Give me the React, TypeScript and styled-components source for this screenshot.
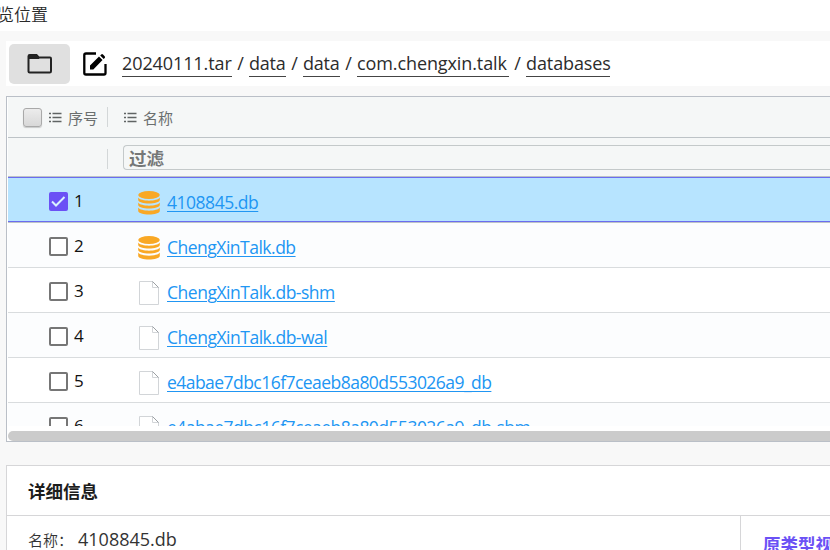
import React from "react";
import styled, { createGlobalStyle, css } from "styled-components";

const Global = createGlobalStyle`
  * { box-sizing: border-box; }
  html, body, #root { height: 100%; }
  body {
    margin: 0;
    overflow: hidden;
    background: #f8f8f8;
    color: #222;
    font-family: "Open Sans", "Noto Sans CJK SC", sans-serif;
  }
`;

const Page = styled.div`
  height: 550px;
  width: 830px;
  overflow: hidden;
  display: flex;
  flex-direction: column;
`;

const TitleBar = styled.header`
  flex: none;
  height: 31px;
  background: #fff;
  font-size: 17px;
  line-height: 30px;
  font-weight: 350;
  color: #2a2a2a;
  white-space: nowrap;
`;

const TitleText = styled.span`
  display: block;
  margin-left: -3px;
`;

const PathBar = styled.nav`
  flex: none;
  height: 45px;
  margin: 10px 0 10px 6px;
  padding-left: 3px;
  background: #fff;
  display: flex;
  align-items: center;
`;

const FolderButton = styled.button`
  width: 61px;
  height: 40px;
  padding: 0;
  margin-bottom: -1px;
  border: 0;
  border-radius: 5px;
  background: #e0e0e0;
  display: flex;
  align-items: center;
  justify-content: center;
`;

const EditButton = styled.button`
  width: 26px;
  height: 26px;
  margin: 0 14px 0 12px;
  padding: 0;
  border: 0;
  background: none;
  display: flex;
`;

const Crumbs = styled.div`
  display: flex;
  font-size: 18px;
  color: #2c2c2c;
  white-space: pre;
`;

const Crumb = styled.a<{ $w: number; $ls: number }>`
  width: ${(p) => p.$w}px;
  height: 26px;
  line-height: 24px;
  letter-spacing: ${(p) => p.$ls}px;
  border-bottom: 1px solid #444;
`;

const Slash = styled.span`
  width: 17px;
  line-height: 24px;
  text-align: center;
`;

const Grid = styled.section`
  flex: none;
  height: 346px;
  margin-left: 6px;
  border: 1px solid #babfc7;
  border-right: 0;
  background: #fff;
  padding-left: 1px;
  display: flex;
  flex-direction: column;
`;

const HeadRow = styled.div<{ $h: number }>`
  flex: none;
  height: ${(p) => p.$h}px;
  background: #f5f7f7;
  border-bottom: 1px solid #bdc3c7;
  display: flex;
  align-items: center;
  color: #6b6f6f;
  font-size: 15px;
`;

const IndexHead = styled.div<{ $top?: number }>`
  width: 100px;
  height: 20px;
  margin-top: ${(p) => p.$top ?? 0}px;
  border-right: 1px solid #d3d7d8;
  display: flex;
  align-items: center;
`;

const HeadCheck = styled.span`
  width: 19px;
  height: 19px;
  margin: 0 7px 0 15px;
  border: 1px solid #a9a9a9;
  border-radius: 3px;
  background: linear-gradient(#ececec, #d8d8d8);
  box-shadow: 0 1px 1px rgba(0, 0, 0, 0.18);
`;

const HeadLabel = styled.span`
  margin-left: 6px;
  line-height: 20px;
  padding-top: 1px;
`;

const NameHead = styled.div`
  margin-left: 16px;
  display: flex;
  align-items: center;
`;

const FilterBox = styled.div`
  flex: 1;
  height: 25px;
  margin-left: 15px;
  padding-left: 5px;
  border: 1px solid #c4c9ca;
  border-right: 0;
  border-radius: 4px 0 0 4px;
  color: #757777;
  font-size: 17.5px;
  font-weight: 700;
  line-height: 25px;
`;

const Body = styled.div`
  height: 249px;
  margin-bottom: 5px;
  overflow: hidden;
`;

const Row = styled.div<{ $selected?: boolean; $odd?: boolean }>`
  height: 45px;
  display: flex;
  align-items: center;
  background: ${(p) => (p.$odd ? "#fcfdfe" : "#fff")};
  border-bottom: 1px solid #d9dcde;
  ${(p) =>
    p.$selected &&
    css`
      height: 46px;
      background: #b7e4ff;
      border-top: 1px solid #6a6cf0;
      border-bottom: 1px solid #bdc3c7;
      box-shadow: inset 0 -1px 0 #6a6cf0;
    `}
`;

const Check = styled.span<{ $on?: boolean }>`
  width: 19px;
  height: 19px;
  margin: 3px 6px 0 41px;
  border: 2px solid ${(p) => (p.$on ? "#6b51f5" : "#767676")};
  border-radius: 2px;
  background: ${(p) => (p.$on ? "#6b51f5" : "#fff")};
  display: flex;
  align-items: center;
  justify-content: center;
`;

const Num = styled.span`
  width: 63px;
  font-size: 17px;
  letter-spacing: -0.5px;
  line-height: 24px;
  color: #111;
  margin-top: 1px;
`;

const IconCell = styled.span`
  width: 24px;
  height: 26px;
  margin: 5px 6px 0 0;
  display: flex;
  justify-content: center;
`;

const FileLink = styled.a<{ $w: number; $ls: number }>`
  width: ${(p) => p.$w}px;
  height: 24px;
  margin-top: 4px;
  line-height: 24px;
  font-size: 17.5px;
  letter-spacing: ${(p) => p.$ls}px;
  white-space: nowrap;
  color: #2196f3;
  text-decoration: underline;
  text-decoration-thickness: 1px;
  text-underline-offset: 2px;
`;

const Scrollbar = styled.div`
  height: 10px;
  background: #cbcbcb;
  border-radius: 5px 0 0 5px;
`;

const Detail = styled.section`
  flex: 1;
  margin: 23px 0 0 6px;
  border: 1px solid #d6d6d8;
  border-width: 1px 0 0 1px;
  background: #fff;
  display: flex;
  flex-direction: column;
`;

const DetailTitle = styled.h2`
  flex: none;
  height: 50px;
  margin: 0;
  padding-left: 21px;
  border-bottom: 1px solid #d6d6d8;
  font-size: 17.5px;
  line-height: 51px;
  font-weight: 700;
  color: #1c1c1c;
`;

const DetailBody = styled.div`
  flex: 1;
  display: flex;
  overflow: hidden;
`;

const DetailInfo = styled.div`
  flex: none;
  width: 734px;
  padding: 11px 0 0 21px;
  border-right: 1px solid #d6d6d8;
  display: flex;
  line-height: 24px;
  font-size: 15px;
  color: #333;
`;

const DetailName = styled.span`
  margin-left: 5px;
  font-size: 18px;
  letter-spacing: 0;
`;

const FieldName = styled.span`
  width: 45px;
  padding-top: 1px;
  font-weight: 350;
  white-space: nowrap;
`;

const DetailTab = styled.div`
  padding: 15px 0 0 22px;
  font-size: 17.5px;
  line-height: 26px;
  font-weight: 700;
  color: #6b51f5;
  white-space: nowrap;
`;

const FolderIcon = () => (
  <svg width="26" height="22" viewBox="0 0 26 22" fill="none">
    <path d="M1.500 18.500V3.200Q1.500 2 2.700 2H9.500l2.200 2.500h11.300Q24 4.500 24 5.800v12.400q0 1.300-1.300 1.300H2.700Q1.500 19.500 1.500 18.500z" stroke="#222" strokeWidth="2" />
    <path d="M1.500 2h8.500l2.500 4H1.500z" fill="#222" />
  </svg>
);

const EditIcon = () => (
  <svg width="26" height="26" viewBox="0 0 26 26" fill="none">
    <path d="M14 2.500H4Q2.300 2.500 2.300 4v18Q2.300 23.500 4 23.500h18q1.500 0 1.500-1.500V13" stroke="#000" strokeWidth="2.300" />
    <path d="M8 18.500v-4L17 5.500l3.500 3.500-9.200 9.500zM18.200 4.500l1-1q.9-.8 1.800 0l1.700 1.700q.8.900 0 1.800l-1 1z" fill="#000" />
  </svg>
);

const ListIcon = () => (
  <svg width="13" height="11" viewBox="0 0 13 11" fill="none">
    <path d="M0 1.500h2M0 5.500h2M0 9.500h2M3.500 1.500H12.500M3.500 5.500H12.500M3.500 9.500H12.500" stroke="#606464" strokeWidth="1.500" />
  </svg>
);

const DatabaseIcon = () => (
  <svg width="24" height="26" viewBox="0 0 24 26" fill="#f9a825">
    <ellipse cx="12" cy="5" rx="10.800" ry="4" />
    <path d="M1.200 7.500c2.500 4.200 19.100 4.200 21.600 0v2.200c0 5-21.600 5-21.600 0z" />
    <path d="M1.200 12.500c2.500 4.200 19.100 4.200 21.600 0v2.200c0 5-21.600 5-21.600 0z" />
    <path d="M1.200 17.500c2.500 4.200 19.100 4.200 21.600 0v3.300c0 5-21.600 5-21.600 0z" />
  </svg>
);

const PageIcon = () => (
  <svg width="24" height="26" viewBox="0 0 24 26" fill="none">
    <path d="M2.500 1.500h13l6 6v17h-19z" fill="#fff" stroke="#d2d5d8" />
    <path d="M15.500 1.500v6h6" stroke="#d2d5d8" />
    <path d="M15.500 1.500l6 6" stroke="#9b9fa3" />
  </svg>
);

const crumbs = [
  { text: "20240111.tar", w: 110, ls: -0.1 },
  { text: "data", w: 37, ls: -0.2 },
  { text: "data", w: 37, ls: -0.2 },
  { text: "com.chengxin.talk", w: 152, ls: -0.1 },
  { text: "databases", w: 84, ls: -0.1 },
];

const files = [
  { name: "4108845.db", w: 91, ls: -0.48, db: true, selected: true },
  { name: "ChengXinTalk.db", w: 129, ls: -0.5, db: true },
  { name: "ChengXinTalk.db-shm", w: 168, ls: -0.48 },
  { name: "ChengXinTalk.db-wal", w: 161, ls: -0.48 },
  { name: "e4abae7dbc16f7ceaeb8a80d553026a9_db", w: 324, ls: -0.54 },
  { name: "e4abae7dbc16f7ceaeb8a80d553026a9_db-shm", w: 363, ls: -0.54 },
];

export default function App() {
  return (
    <Page>
      <Global />
      <TitleBar>
        <TitleText>览位置</TitleText>
      </TitleBar>
      <PathBar>
        <FolderButton>
          <FolderIcon />
        </FolderButton>
        <EditButton>
          <EditIcon />
        </EditButton>
        <Crumbs>
          {crumbs.map((c, i) => (
            <React.Fragment key={i}>
              {i > 0 && <Slash>/</Slash>}
              <Crumb $w={c.w} $ls={c.ls}>
                {c.text}
              </Crumb>
            </React.Fragment>
          ))}
        </Crumbs>
      </PathBar>
      <Grid>
        <HeadRow $h={41}>
          <IndexHead>
            <HeadCheck />
            <ListIcon />
            <HeadLabel>序号</HeadLabel>
          </IndexHead>
          <NameHead>
            <ListIcon />
            <HeadLabel>名称</HeadLabel>
          </NameHead>
        </HeadRow>
        <HeadRow $h={39}>
          <IndexHead $top={4} />
          <FilterBox>过滤</FilterBox>
        </HeadRow>
        <Body>
          {files.map((f, i) => (
            <Row key={f.name} $selected={f.selected} $odd={i % 2 === 1}>
              <Check $on={f.selected}>
                {f.selected && (
                  <svg width="15" height="15" viewBox="0 0 15 15" fill="none">
                    <path d="M1 7.500l4 4 8.500-8.500" stroke="#d9f0ff" strokeWidth="2" />
                  </svg>
                )}
              </Check>
              <Num>{i + 1}</Num>
              <IconCell>{f.db ? <DatabaseIcon /> : <PageIcon />}</IconCell>
              <FileLink $w={f.w} $ls={f.ls}>
                {f.name}
              </FileLink>
            </Row>
          ))}
        </Body>
        <Scrollbar />
      </Grid>
      <Detail>
        <DetailTitle>详细信息</DetailTitle>
        <DetailBody>
          <DetailInfo>
            <FieldName>名称：</FieldName>
            <DetailName>4108845.db</DetailName>
          </DetailInfo>
          <DetailTab>原类型视图</DetailTab>
        </DetailBody>
      </Detail>
    </Page>
  );
}
